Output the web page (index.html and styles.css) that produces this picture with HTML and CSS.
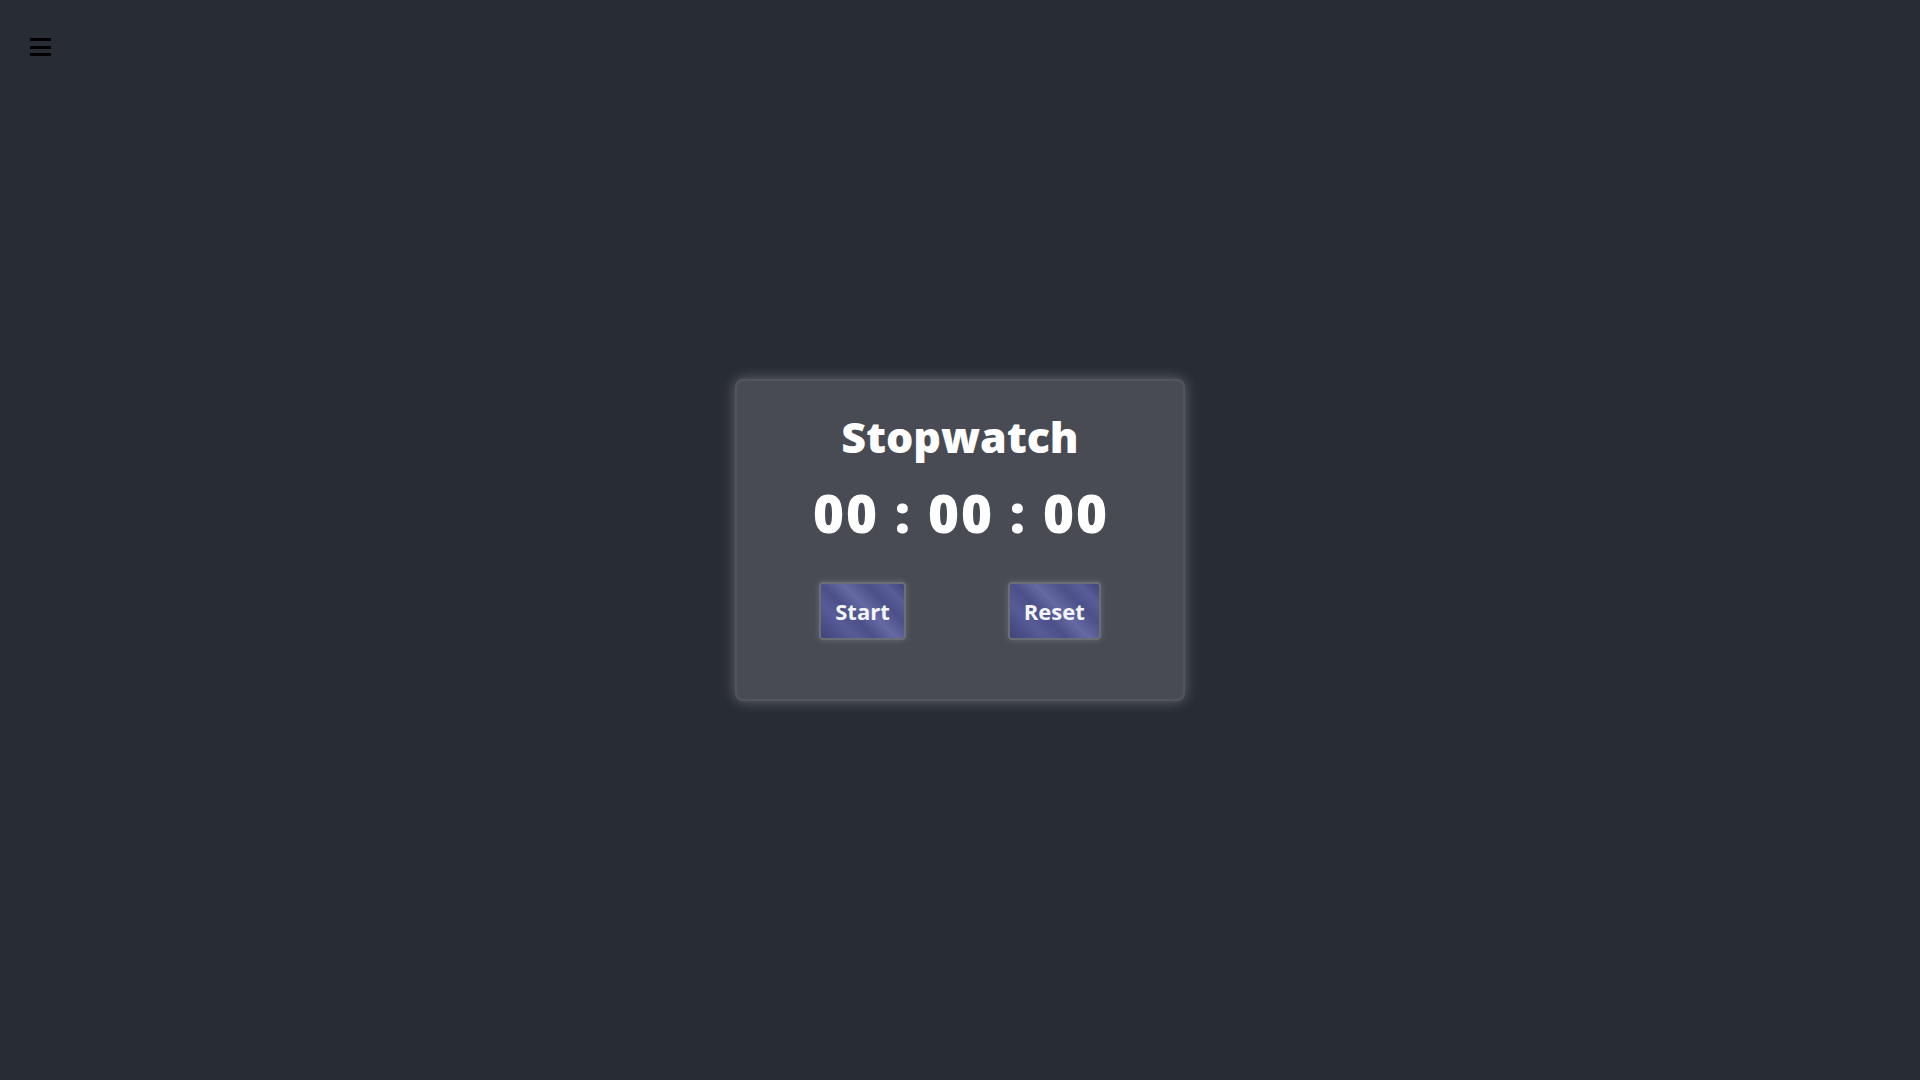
FILE: index.html
```html
<!DOCTYPE html>
<html lang="en">
<head>
<meta charset="utf-8">
<title>Stopwatch</title>
<link rel="stylesheet" href="styles.css">
</head>
<body>
<button class="menu" aria-label="Menu">
  <svg width="21" height="18" viewBox="0 0 21 18"><rect x="0" y="0" width="21" height="3" fill="#000"/><rect x="0" y="8" width="21" height="3" fill="#000"/><rect x="0" y="15" width="21" height="3" fill="#000"/></svg>
</button>
<main class="card">
  <h1 class="title">Stopwatch</h1>
  <div class="time">00 : 00 : 00</div>
  <div class="actions">
    <button class="btn">Start</button>
    <button class="btn">Reset</button>
  </div>
</main>
</body>
</html>
```
FILE: styles.css
```css
html, body {
  margin: 0;
  padding: 0;
}
body {
  background: #282c34;
  min-height: 100vh;
  display: flex;
  align-items: center;
  justify-content: center;
  font-family: "Open Sans", "DejaVu Sans", sans-serif;
  color: #ffffff;
}
.menu {
  position: absolute;
  left: 30px;
  top: 38px;
  padding: 0;
  margin: 0;
  border: 0;
  background: none;
  line-height: 0;
  cursor: pointer;
}
.card {
  box-sizing: border-box;
  width: 450px;
  background: #484b53;
  border: 2px solid #52555d;
  border-radius: 8px;
  box-shadow: 0 0 14px rgba(255, 255, 255, 0.28);
  padding: 30px 0 59px;
  display: flex;
  flex-direction: column;
  align-items: center;
}
.title {
  margin: 0;
  font-size: 43px;
  font-weight: 800;
  line-height: 1.2;
}
.time {
  margin-top: 19px;
  font-size: 53px;
  font-weight: 800;
  line-height: 1.2;
  letter-spacing: 2px;
  padding-left: 2px;
}
.actions {
  margin-top: 37px;
  display: flex;
  gap: 102px;
}
.btn {
  font-family: inherit;
  font-size: 22px;
  font-weight: 700;
  line-height: 1.2;
  color: #f4f4f8;
  padding: 14px 14px;
  border: 2px solid #6c6e76;
  border-radius: 4px;
  background: linear-gradient(45deg, #40447b 0%, #575b97 25%, #4c5089 40%, #666aa4 55%, #4c5089 72%, #585c98 86%, #40447b 100%);
  box-shadow: 0 0 6px rgba(255, 255, 255, 0.18);
  cursor: pointer;
}
```
